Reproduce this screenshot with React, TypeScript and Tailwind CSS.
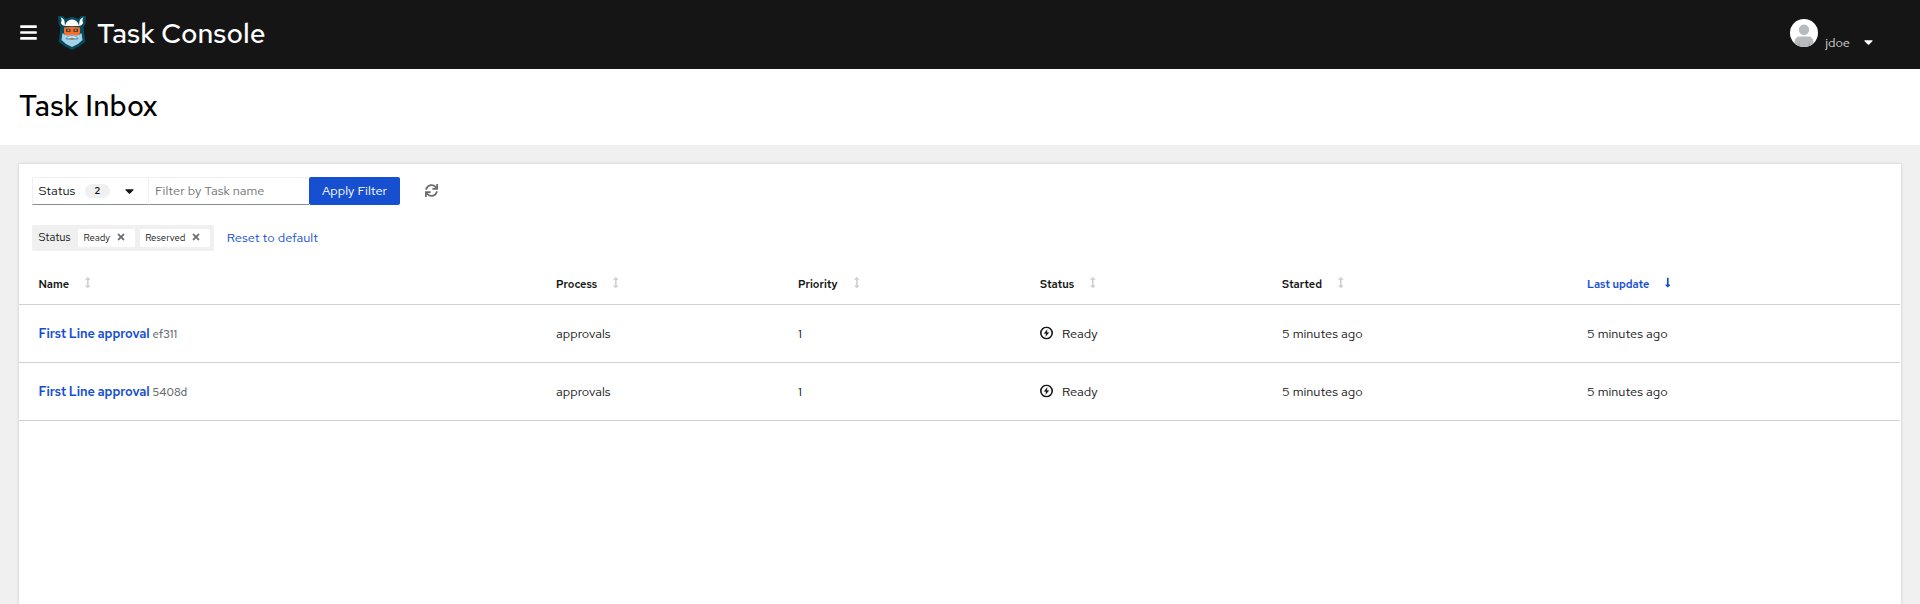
import type { ReactNode } from 'react';
import { FaArrowsAltV, FaBars, FaCaretDown, FaLongArrowAltDown, FaSync, FaTimes } from 'react-icons/fa';

function Logo() {
  return (
    <svg viewBox="0 0 28 34" className="ml-[21px] h-[34px] w-7 shrink-0">
      <path d="M0 0 L5 0 L8 3 Q14 -1 20 3 L23 0 L28 0 L27.5 8 L25.5 11 L27.3 26 L21 30.5 L14 34 L7 30.5 L0.7 26 L2.5 11 L0.5 8Z" fill="#07495d" />
      <path d="M2.5 1.5 Q5 1.5 6.5 5 L7 10 Q3.5 9.5 2.8 6.5 Q4.5 4.5 2.5 1.5ZM25.5 1.5 Q23 1.5 21.5 5 L21 10 Q24.5 9.5 25.2 6.5 Q23.5 4.5 25.5 1.5Z" fill="#fff" />
      <path d="M7 10 Q8 4 14 3.5 Q20 4 21 10Z" fill="#fff" />
      <path d="M6 11.5 Q14 10 22 11.5 V17 L20 20 H8 L6 17Z" fill="#ff6b22" />
      <path d="M8 12.7h4.5v3.2H8zM15.5 12.7H20v3.2h-4.5z" fill="#3d4a4a" />
      <circle cx="10.3" cy="14.3" r="1" fill="#ff6b22" />
      <circle cx="17.7" cy="14.3" r="1" fill="#ff6b22" />
      <path d="M4.5 17 L6.5 18.5 L9 19.5 L14 18.5 L19 19.5 L21.5 18.5 L23.5 17 L24.5 24 L20 28 L14 31 L8 28 L3.5 24Z" fill="#a3d3eb" />
      <path d="M7.5 23 Q9 19.2 14 19.2 Q19 19.2 20.5 23 Q17 24 14 23 Q11 24 7.5 23Z" fill="#4d8fa8" />
      <path d="M8.5 22 Q12 19 14 20.3 Q16 19 19.5 22 Q16 22.8 14 21.6 Q12 22.8 8.5 22Z" fill="#d3edf9" />
      <path d="M12.2 23h3.6v1h-3.6z" fill="#f46b2a" />
    </svg>
  );
}

function Avatar() {
  return (
    <svg viewBox="0 0 28 28" className="h-7 w-7">
      <defs>
        <clipPath id="avatar">
          <circle cx="14" cy="14" r="14" />
        </clipPath>
      </defs>
      <g clipPath="url(#avatar)">
        <rect width="28" height="28" fill="#fff" />
        <circle cx="14" cy="10.7" r="5.2" fill="#b8bbbe" />
        <path d="M4.5 28V23Q5 17.5 10 17.5H18Q23 17.5 23.5 23V28Z" fill="#b8bbbe" />
        <path d="M8.5 23.5h1.2V28H8.5zM18.5 23.5h1.2V28h-1.2z" fill="#a3a6a9" />
      </g>
    </svg>
  );
}

function ReadyIcon() {
  return (
    <svg viewBox="0 0 13 13" className="h-[13px] w-[13px] -translate-y-[0.5px]">
      <circle cx="6.5" cy="6.5" r="5.7" fill="none" stroke="#151515" strokeWidth="1.6" />
      <path d="M7.2 3 L4 7.1 H6.1 L5.7 10 L9 5.9 H6.9Z" fill="#151515" stroke="#151515" strokeWidth="0.2" />
    </svg>
  );
}

function Head({ children }: { children: ReactNode }) {
  return (
    <div className="flex items-center gap-4 pt-px text-[11px] font-semibold">
      {children}
      <FaArrowsAltV className="h-[11.2px] w-[5.6px] -translate-y-px text-[#d2d2d2]" />
    </div>
  );
}

function Chip({ label }: { label: string }) {
  return (
    <span className="flex h-[18px] items-center gap-[7px] rounded-[2px] bg-white pr-[9.5px] pl-[5.5px] text-[9.6px] text-[#151515]">
      {label}
      <FaTimes className="h-[10px] w-[8px] -translate-y-px text-[#6a6e73]" />
    </span>
  );
}

const columns = 'grid grid-cols-[517.5px_242px_242px_242px_305px_1fr] items-center pl-[19.5px] mr-px border-b border-[#d2d2d2]';

function Row({ id }: { id: string }) {
  return (
    <div className={`${columns} h-[58px] text-[12.8px]`}>
      <div className="flex items-baseline gap-[3px]">
        <a className="text-[12.8px] font-semibold tracking-[-0.1px] text-[#1650d0]">First Line approval</a>
        <span className="text-[11.2px] font-medium text-[#6a6e73]">{id}</span>
      </div>
      <div>approvals</div>
      <div>1</div>
      <div className="flex items-center gap-[9px]">
        <ReadyIcon />
        Ready
      </div>
      <div>5 minutes ago</div>
      <div>5 minutes ago</div>
    </div>
  );
}

export default function App() {
  return (
    <div className="flex h-[604px] flex-col overflow-hidden bg-[#f0f0f0] font-['Red_Hat_Text','Inter',sans-serif] text-[#151515]">
      <header className="flex h-[69px] shrink-0 items-center bg-[#151515] pb-[3px] pl-5 text-white">
        <FaBars className="-mt-0.5 h-[19px] w-[17px]" />
        <Logo />
        <span className="ml-[11px] text-[28px] font-medium">Task Console</span>
        <div className="mr-[47px] ml-auto flex items-center">
          <Avatar />
          <span className="mt-[19px] ml-[7px] text-[12.8px] text-[#d8d8d8]">jdoe</span>
          <FaCaretDown className="mt-[17px] ml-[14px] h-[14px] w-[9px]" />
        </div>
      </header>
      <section className="flex h-[76px] shrink-0 items-center bg-white pl-[19px]">
        <h1 className="text-[28.8px] font-medium tracking-[0.1px] text-black">Task Inbox</h1>
      </section>
      <main className="mx-[19px] mt-[19px] flex-1 bg-white shadow-[0_0_3px_rgba(3,3,3,0.18)]">
        <div className="flex items-center pt-[13px] pl-[13px] text-[12.8px]">
          <button className="flex h-7 w-[117px] items-center border border-[#f0f0f0] border-b-[#8a8d90] pl-[5.5px]">
            Status
            <span className="ml-[9.5px] flex h-[14px] w-[25px] items-center justify-center rounded-full bg-[#f0f0f0] text-[9.6px] font-semibold">2</span>
            <FaCaretDown className="ml-[15.5px] h-[14px] w-[9px]" />
          </button>
          <div className="flex h-7 w-[160px] items-center border-t border-b border-[#f0f0f0] border-b-[#8a8d90] pl-[6px] text-[#757575]">
            Filter by Task name
          </div>
          <button className="h-7 w-[91px] rounded-[2px] bg-[#1650d0] text-white">Apply Filter</button>
          <FaSync className="-mt-px ml-[25px] h-[13px] w-[13px] text-[#6a6e73]" />
        </div>
        <div className="mt-5 ml-[13px] flex items-center">
          <div className="flex h-[26px] items-center rounded-[2px] bg-[#f0f0f0] pr-1 pl-[6.4px]">
            <span className="mr-[7.4px] text-[11.2px] leading-none">Status</span>
            <Chip label="Ready" />
            <span className="w-[5px]" />
            <Chip label="Reserved" />
          </div>
          <a className="ml-[13px] text-[12.8px] text-[#1650d0]">Reset to default</a>
        </div>
        <div className={`${columns} mt-[12px] h-[42px]`}>
          <Head>Name</Head>
          <Head>Process</Head>
          <Head>Priority</Head>
          <Head>Status</Head>
          <Head>Started</Head>
          <div className="flex items-center gap-4 pt-px text-[11px] font-semibold text-[#1650d0]">
            Last update
            <FaLongArrowAltDown className="h-[11.2px] w-[5.6px] -translate-y-px" />
          </div>
        </div>
        <Row id="ef311" />
        <Row id="5408d" />
      </main>
    </div>
  );
}
